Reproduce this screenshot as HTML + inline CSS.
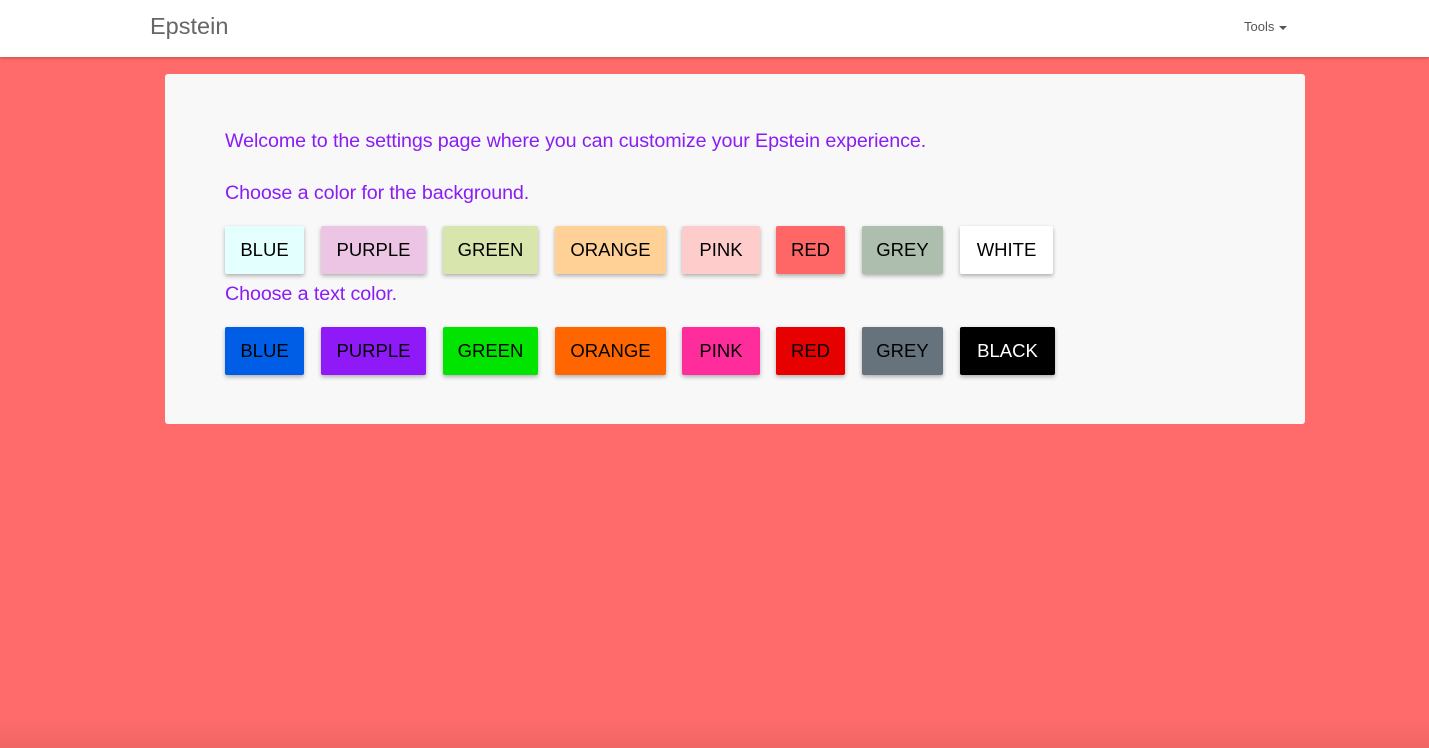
<!DOCTYPE html>
<html><head><meta charset="utf-8"><style>
body{margin:0;width:1429px;height:748px;background:#ff6b6b;font-family:"Liberation Sans",sans-serif;position:relative;overflow:hidden}
.nav{position:absolute;left:0;top:0;width:1429px;height:57px;background:#fff;box-shadow:0 1px 3px rgba(0,0,0,.25)}
.brand{position:absolute;left:150px;top:13px;font-size:23.5px;color:#666}
.tools{position:absolute;left:1244px;top:19px;font-size:13px;color:#555}
.caret{display:inline-block;border-left:4px solid transparent;border-right:4px solid transparent;border-top:4px solid #555;vertical-align:middle;margin-left:5px}
.card{position:absolute;left:165px;top:74px;width:1140px;height:350px;background:#f8f8f8;border-radius:3px}
.t{position:absolute;left:225px;color:#8a1cf5;font-size:19.7px;font-weight:300;letter-spacing:-0.1px}
.b{position:absolute;height:48px;line-height:48px;text-align:center;font-size:18.5px;color:#000;border-radius:2px;box-shadow:0 2px 4px rgba(0,0,0,.3)}
.bottom{position:absolute;left:0;top:718px;width:1429px;height:30px;background:linear-gradient(rgba(0,0,0,0),rgba(0,0,0,.06))}
</style></head><body>
<div class="nav"><div class="brand">Epstein</div><div class="tools">Tools<span class="caret"></span></div></div>
<div class="card"></div>
<div class="t" style="top:130px">Welcome to the settings page where you can customize your Epstein experience.</div>
<div class="t" style="top:182px">Choose a color for the background.</div>
<div class="t" style="top:283px">Choose a text color.</div>
<div class="b" style="top:226px;left:225px;width:79px;background:#e3fffe">BLUE</div>
<div class="b" style="top:226px;left:321px;width:105px;background:#ecc5e5">PURPLE</div>
<div class="b" style="top:226px;left:443px;width:95px;background:#d8e5ad">GREEN</div>
<div class="b" style="top:226px;left:555px;width:111px;background:#ffd196">ORANGE</div>
<div class="b" style="top:226px;left:682px;width:78px;background:#ffcccc">PINK</div>
<div class="b" style="top:226px;left:776px;width:69px;background:#ff6666">RED</div>
<div class="b" style="top:226px;left:862px;width:81px;background:#adbeae">GREY</div>
<div class="b" style="top:226px;left:960px;width:93px;background:#fff">WHITE</div>
<div class="b" style="top:327px;left:225px;width:79px;background:#005ee6">BLUE</div>
<div class="b" style="top:327px;left:321px;width:105px;background:#9019f7">PURPLE</div>
<div class="b" style="top:327px;left:443px;width:95px;background:#00e400">GREEN</div>
<div class="b" style="top:327px;left:555px;width:111px;background:#ff6600">ORANGE</div>
<div class="b" style="top:327px;left:682px;width:78px;background:#ff2c9c">PINK</div>
<div class="b" style="top:327px;left:776px;width:69px;background:#e60000">RED</div>
<div class="b" style="top:327px;left:862px;width:81px;background:#66737c">GREY</div>
<div class="b" style="top:327px;left:960px;width:95px;background:#000;color:#fff">BLACK</div>
<div class="bottom"></div>
</body></html>
